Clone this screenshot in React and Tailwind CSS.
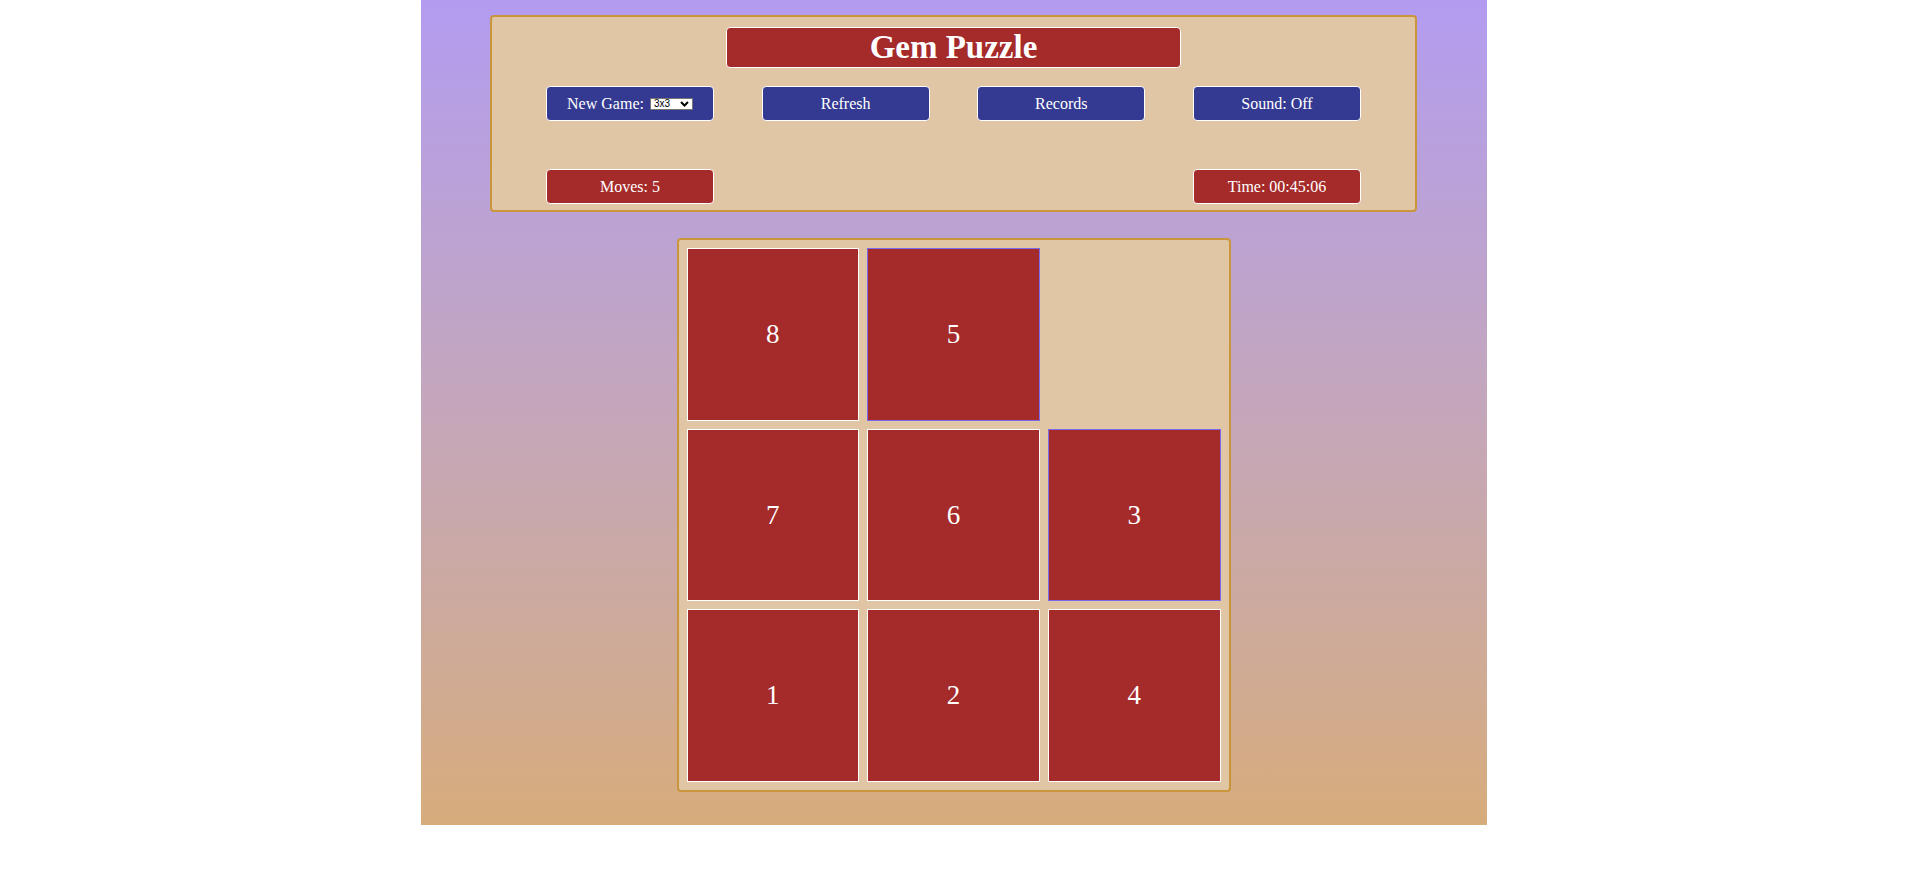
import React from "react";

const tiles = [
  { n: 8, hl: false },
  { n: 5, hl: true },
  { n: null },
  { n: 7, hl: false },
  { n: 6, hl: false },
  { n: 3, hl: true },
  { n: 1, hl: false },
  { n: 2, hl: false },
  { n: 4, hl: false },
];

function Btn({ children, red }) {
  return (
    <div
      className={
        "w-[168px] h-[35px] flex items-center justify-center rounded-[4px] border border-white text-white text-[16px] " +
        (red ? "bg-[#a52a2a]" : "bg-[#343a92]")
      }
    >
      {children}
    </div>
  );
}

export default function App() {
  return (
    <div className="w-full bg-white pl-[2px]" style={{ fontFamily: '"Liberation Serif", "Times New Roman", serif' }}>
      <div className="w-[1066px] h-[825px] mx-auto bg-gradient-to-b from-[#b39cf0] to-[#d7ac7b] pt-[15px]">
        <div className="w-[927px] mx-auto border-2 border-[#c9963c] rounded-[4px] bg-[#e0c6a4] pt-[10px] pb-[6px]">
          <div className="w-[455px] h-[41px] mx-auto bg-[#a52a2a] border border-white rounded-[4px] flex items-center justify-center text-white text-[33px] font-bold leading-none">
            Gem Puzzle
          </div>
          <div className="mt-[18px] flex justify-between pl-[54px] pr-[54px]">
            <Btn>
              <span>New Game:</span>
              <span className="ml-[6px] inline-flex items-center justify-between h-[12px] w-[43px] bg-white border border-[#767676] text-black text-[10px] leading-none pl-[3px] pr-[3px]" style={{ fontFamily: '"Liberation Sans", Arial, sans-serif' }}>
                <span>3x3</span>
                <svg width="9" height="6" viewBox="0 0 9 6">
                  <path d="M1 1 L4.5 4.5 L8 1" stroke="black" strokeWidth="2" fill="none" />
                </svg>
              </span>
            </Btn>
            <Btn>Refresh</Btn>
            <Btn>Records</Btn>
            <Btn>Sound: Off</Btn>
          </div>
          <div className="mt-[48px] flex justify-between pl-[54px] pr-[54px]">
            <Btn red>Moves: 5</Btn>
            <Btn red>Time: 00:45:06</Btn>
          </div>
        </div>
        <div className="mt-[26px] w-[554px] h-[554px] mx-auto border-2 border-[#c9963c] rounded-[4px] bg-[#e0c6a4] p-2 grid grid-cols-3 grid-rows-3 gap-2">
          {tiles.map((t, i) =>
            t.n === null ? (
              <div key={i} />
            ) : (
              <div
                key={i}
                className={
                  "bg-[#a52a2a] border flex items-center justify-center text-white text-[27px] " +
                  (t.hl ? "border-[#7b68ee]" : "border-white")
                }
              >
                {t.n}
              </div>
            )
          )}
        </div>
      </div>
    </div>
  );
}
